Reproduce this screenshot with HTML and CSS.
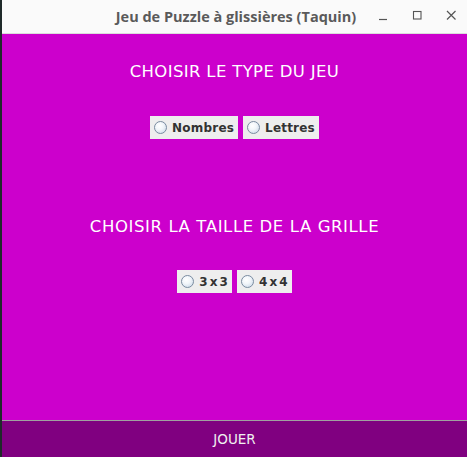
FILE: index.html
```html
<!DOCTYPE html>
<html lang="fr">
<head>
<meta charset="utf-8">
<title>Jeu de Puzzle à glissières (Taquin)</title>
<link rel="stylesheet" href="styles.css">
</head>
<body>
<div class="window">
  <header class="titlebar">
    <span class="title">Jeu de Puzzle à glissières (Taquin)</span>
    <div class="controls">
      <svg class="ctl" width="12" height="12" viewBox="0 0 12 12"><path d="M2 10.5h8" stroke="#555" stroke-width="1.2"/></svg>
      <svg class="ctl" width="12" height="12" viewBox="0 0 12 12"><rect x="2.5" y="2.5" width="7.5" height="7.5" fill="none" stroke="#555" stroke-width="1.1"/></svg>
      <svg class="ctl" width="12" height="12" viewBox="0 0 12 12"><path d="M2 2l8.5 8.5M10.5 2L2 10.5" stroke="#555" stroke-width="1.2"/></svg>
    </div>
  </header>
  <main class="content">
    <h2 class="heading first">CHOISIR LE TYPE DU JEU</h2>
    <div class="radios">
      <label class="radio"><span class="dot"></span>Nombres</label>
      <label class="radio"><span class="dot"></span>Lettres</label>
    </div>
    <h2 class="heading second">CHOISIR LA TAILLE DE LA GRILLE</h2>
    <div class="radios">
      <label class="radio"><span class="dot"></span>3 x 3</label>
      <label class="radio"><span class="dot"></span>4 x 4</label>
    </div>
  </main>
  <button class="play">JOUER</button>
</div>
</body>
</html>
```
FILE: styles.css
```css
html, body {
  margin: 0;
  padding: 0;
  height: 100%;
  background: #1f2a2a;
  overflow: hidden;
}
.window {
  margin-left: 2px;
  height: 457px;
  display: flex;
  flex-direction: column;
}
.titlebar {
  height: 33px;
  flex: none;
  background: #fafafa;
  border-bottom: 1px solid #dcdcdc;
  position: relative;
  display: flex;
  align-items: center;
  justify-content: center;
}
.title {
  font-family: "Open Sans", "DejaVu Sans", sans-serif;
  font-weight: 700;
  font-size: 14.5px;
  color: #5a5a5a;
  margin-left: 3px;
  margin-top: -1px;
}
.controls {
  position: absolute;
  top: 9px;
  right: 10px;
  display: flex;
  gap: 22px;
}
.ctl { display: block; }
.content {
  flex: 1;
  background: #cc00cc;
  display: flex;
  flex-direction: column;
  align-items: center;
}
.heading {
  margin: 0;
  font-family: "DejaVu Sans", sans-serif;
  font-weight: normal;
  font-size: 16.5px;
  line-height: 20px;
  color: #ffffff;
  letter-spacing: 0.35px;
}
.heading.first { margin-top: 28px; margin-bottom: 34px; }
.heading.second { margin-top: 78px; margin-bottom: 33px; letter-spacing: 0.6px; }
.radios {
  display: flex;
  gap: 5px;
}
.radio {
  display: flex;
  align-items: center;
  height: 23px;
  padding: 0 4px 0 4px;
  background: #eeeeee;
  font-family: "DejaVu Sans", sans-serif;
  font-weight: 700;
  font-size: 12px;
  color: #333333;
  letter-spacing: 0.2px;
  word-spacing: -2.5px;
}
.dot {
  width: 11px;
  height: 11px;
  border-radius: 50%;
  border: 1px solid #7a8ca0;
  background: radial-gradient(circle at 40% 35%, #ffffff 0%, #f2f6fa 40%, #c4d4e4 100%);
  margin-right: 5px;
}
.play {
  height: 37px;
  flex: none;
  border: none;
  border-top: 1px solid #a0a0a0;
  background: #800080;
  color: #f0f0f0;
  font-family: "DejaVu Sans", sans-serif;
  font-size: 13.5px;
  padding: 0;
  margin: 0;
  width: 100%;
}
```
